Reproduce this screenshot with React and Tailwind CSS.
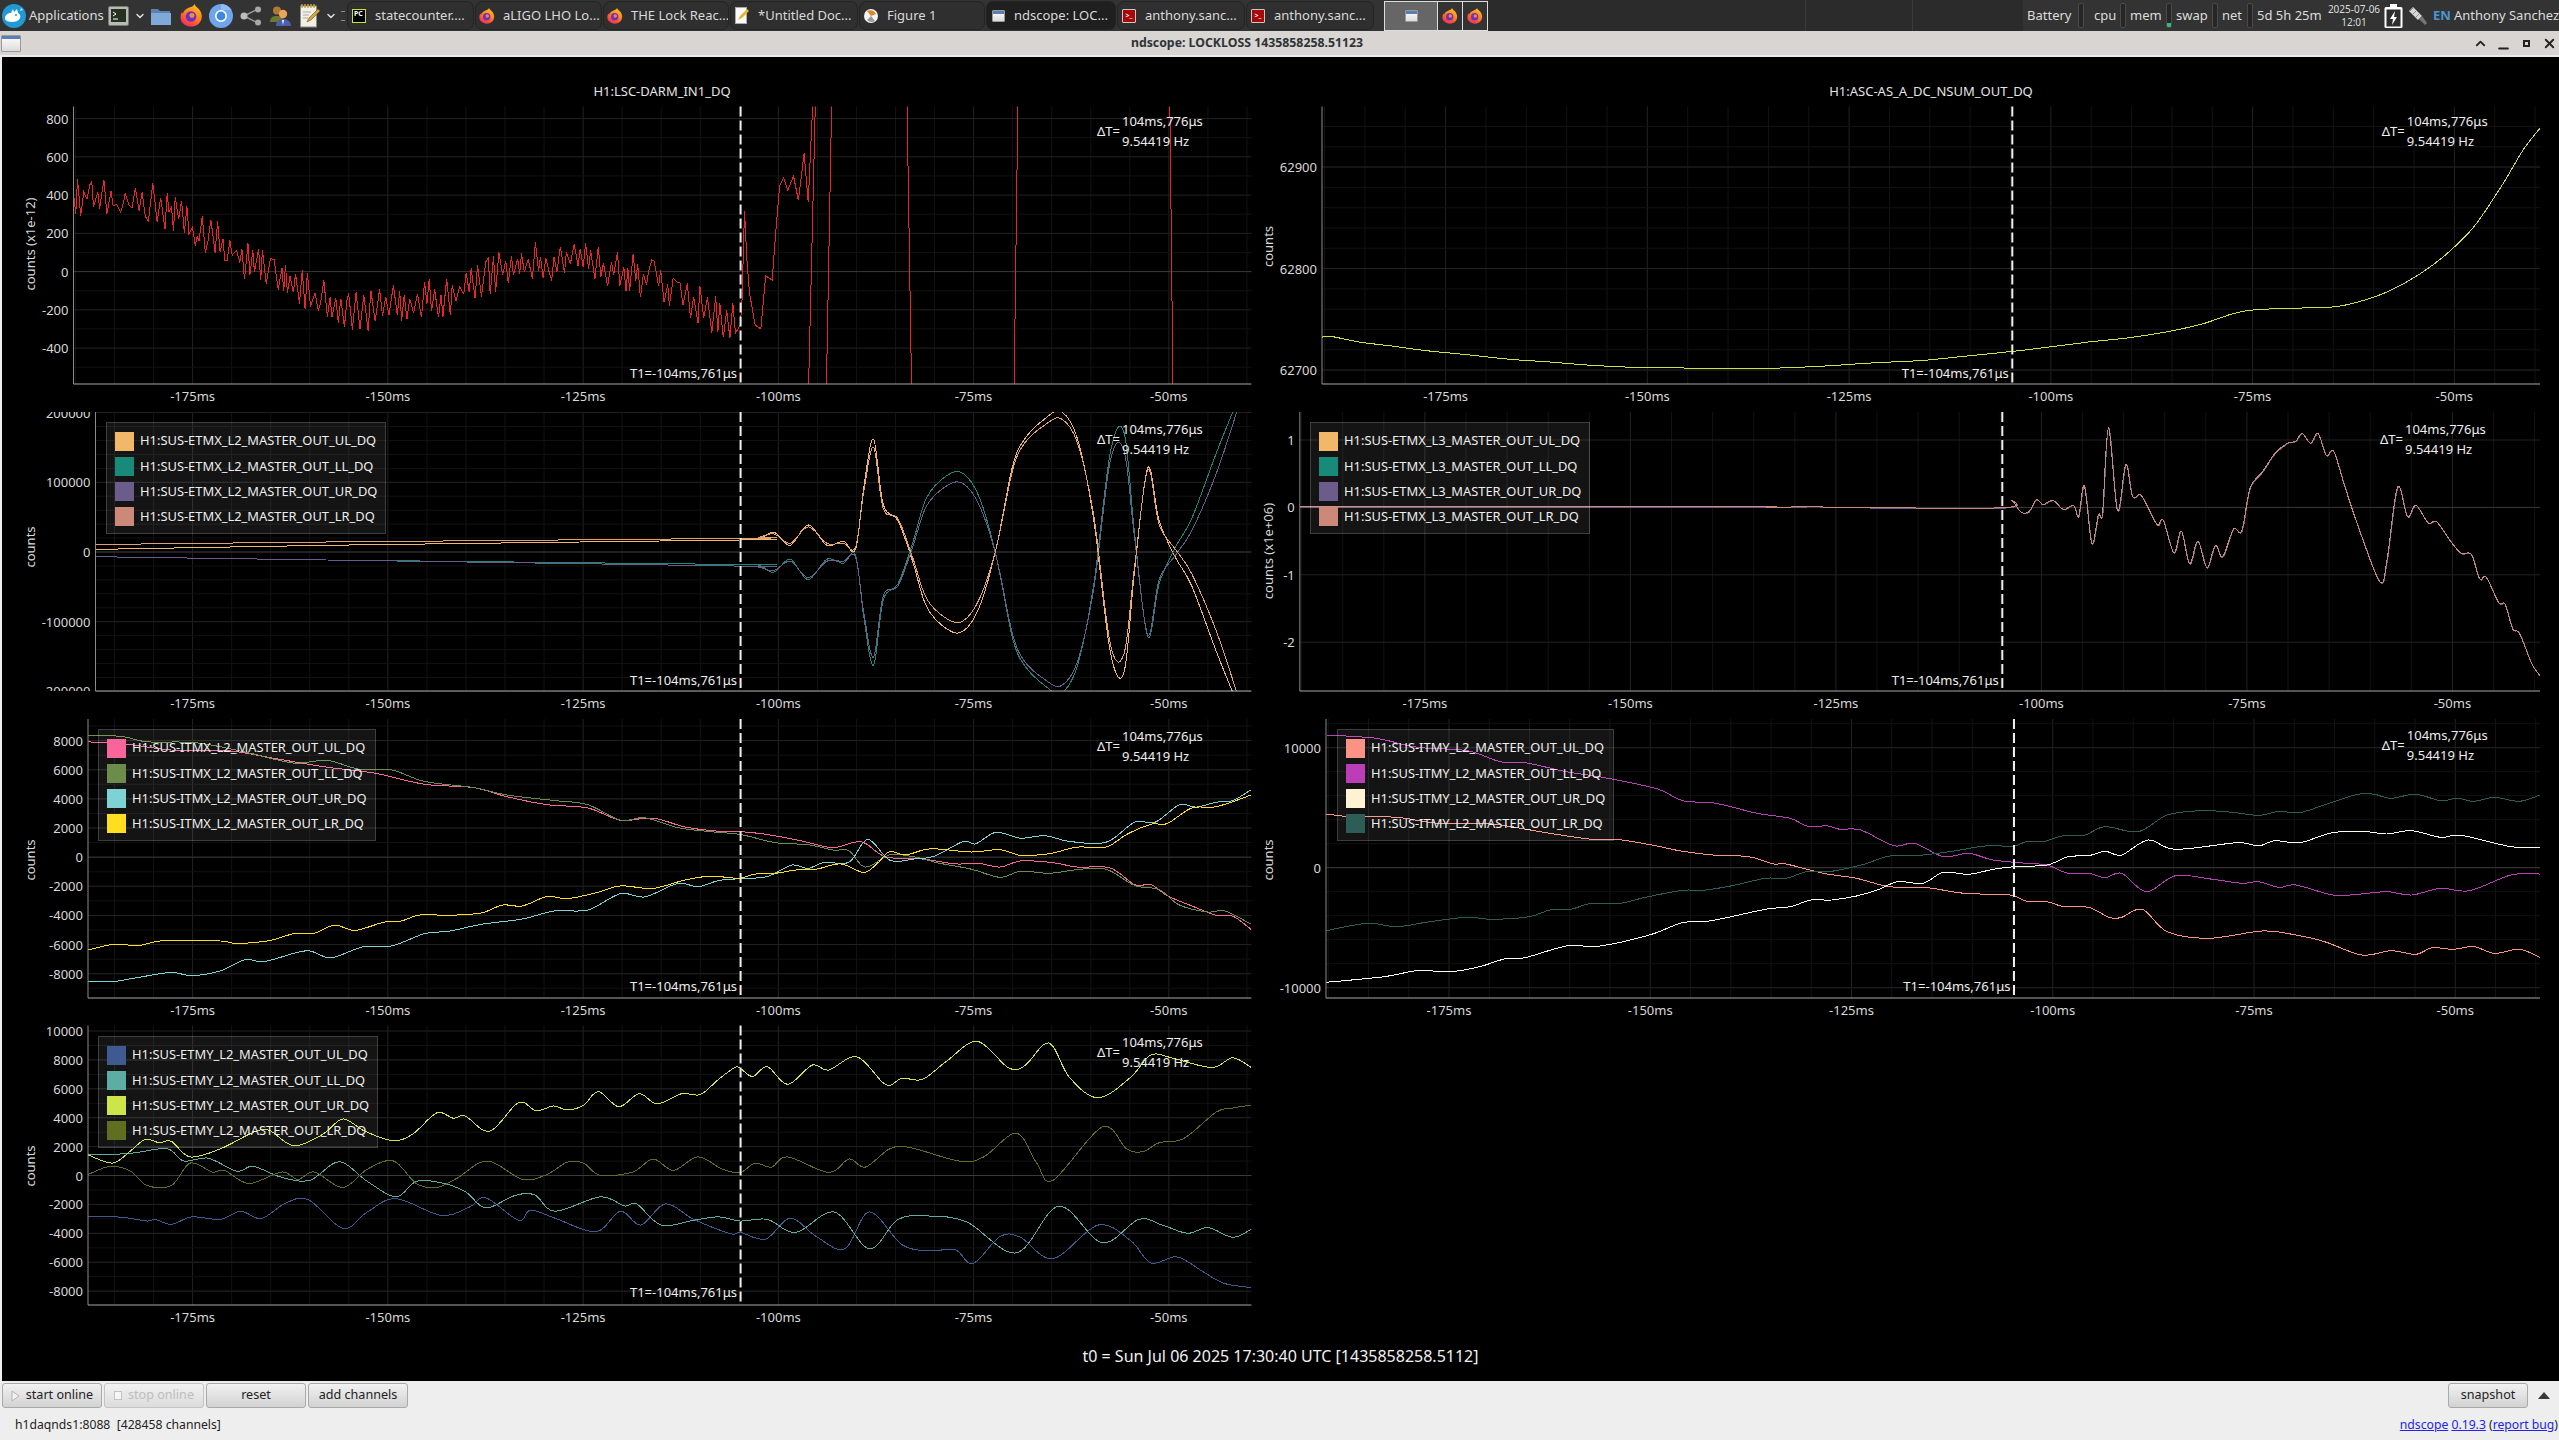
import React from 'react'
import { ChevronDown, ChevronUp, Minus, X } from 'lucide-react'

const SX = 1.225
const SY = 2.45
const SX2 = 1.207

// zoom coordinates -> page coordinates
const left = (pts, oy) => pts.map(([x, y]) => [x / SX, y / SY + oy])
const right = (pts, oy, sy = SY) => pts.map(([x, y]) => [x / SX2 + 1260, y / sy + oy])

const smooth = (p) => {
  let d = `M${p[0][0].toFixed(1)} ${p[0][1].toFixed(1)}`
  for (let i = 0; i < p.length - 1; i++) {
    const a = p[Math.max(i - 1, 0)], b = p[i], c = p[i + 1], e = p[Math.min(i + 2, p.length - 1)]
    const c1 = [b[0] + (c[0] - a[0]) / 6, b[1] + (c[1] - a[1]) / 6]
    const c2 = [c[0] - (e[0] - b[0]) / 6, c[1] - (e[1] - b[1]) / 6]
    d += `C${c1[0].toFixed(1)} ${c1[1].toFixed(1)} ${c2[0].toFixed(1)} ${c2[1].toFixed(1)} ${c[0].toFixed(1)} ${c[1].toFixed(1)}`
  }
  return d
}
const poly = (p) => 'M' + p.map(([x, y]) => `${x.toFixed(1)} ${y.toFixed(1)}`).join('L')

let seed = 17
const rnd = () => {
  seed = (seed * 16807) % 2147483647
  return seed / 2147483647
}

const DARM_BASE = [[90, 285], [170, 290], [210, 320], [250, 370], [300, 440], [350, 500], [400, 545], [450, 570], [500, 545], [550, 530], [600, 480], [650, 450], [700, 440], [750, 465], [800, 490], [850, 540], [880, 580], [907, 600]]
const baseAt = (x) => {
  for (let i = 0; i < DARM_BASE.length - 1; i++) {
    const [a, b] = DARM_BASE[i], [c, d] = DARM_BASE[i + 1]
    if (x <= c) return b + ((x - a) / (c - a)) * (d - b)
  }
  return 600
}
const darmNoise = () => {
  const out = []
  let x = 90
  let up = true
  while (x < 905) {
    const amp = 6 + rnd() * 46
    out.push([x, baseAt(x) + (up ? -amp : amp)])
    x += 2 + rnd() * 3.4
    if (rnd() > 0.1) up = !up
  }
  return out
}
const DARM = [...darmNoise(), [907, 600], [909, 540], [912, 320], [915, 440], [918, 520], [925, 600], [932, 610], [938, 480], [946, 490], [950, 380], [955, 260], [960, 240], [965, 270], [972, 235], [978, 295], [985, 180], [990, 300], [996, 40], [999, 40], [990, 790], [1012, 790], [1019, 40], [1111, 40], [1117, 790], [1242, 790], [1247, 40], [1433, 40], [1437, 790]]

const ETMX_A = [[117, 1150], [400, 1140], [907, 1127], [930, 1125], [948, 1108], [968, 1140], [990, 1090], [1013, 1140], [1033, 1130], [1048, 1150], [1058, 1000], [1070, 880], [1082, 1040], [1100, 1080], [1118, 1180], [1135, 1290], [1160, 1345], [1180, 1350], [1200, 1290], [1220, 1150], [1240, 950], [1255, 880], [1280, 830], [1300, 812], [1320, 880], [1340, 1080], [1360, 1400], [1377, 1450], [1390, 1200], [1406, 950], [1420, 1080], [1440, 1170], [1460, 1240], [1490, 1400], [1510, 1500]]
const ETMX_B = [[117, 1138], [400, 1132], [907, 1123], [930, 1120], [948, 1112], [968, 1135], [990, 1095], [1013, 1135], [1033, 1135], [1048, 1145], [1058, 1010], [1070, 900], [1082, 1050], [1100, 1075], [1118, 1170], [1135, 1270], [1160, 1320], [1180, 1325], [1200, 1270], [1220, 1150], [1240, 960], [1255, 890], [1280, 845], [1300, 830], [1320, 890], [1340, 1070], [1360, 1380], [1377, 1405], [1390, 1190], [1406, 955], [1420, 1090], [1440, 1150], [1460, 1210], [1490, 1350], [1515, 1500]]
const mirror = (p) => p.map(([x, y]) => [x, x < 907 ? 1168 + ((x - 117) / 790) * 22 : 2314 - y])

const L3 = [[48, 1046], [580, 1046], [596, 1044], [620, 1047], [670, 1045], [700, 1047], [896, 1048], [907, 1030], [918, 1058], [928, 1058], [937, 1028], [945, 1040], [957, 1030], [970, 1052], [982, 1042], [988, 1070], [995, 995], [1004, 1135], [1012, 1065], [1017, 1060], [1024, 852], [1035, 1055], [1045, 942], [1053, 1020], [1062, 1015], [1070, 1040], [1083, 1090], [1090, 1078], [1103, 1158], [1112, 1105], [1122, 1185], [1132, 1130], [1143, 1195], [1153, 1140], [1162, 1168], [1175, 1100], [1185, 1105], [1195, 1000], [1210, 960], [1225, 915], [1240, 890], [1250, 885], [1258, 866], [1268, 890], [1277, 866], [1287, 920], [1296, 910], [1310, 1000], [1330, 1120], [1352, 1230], [1360, 1180], [1373, 998], [1385, 1070], [1395, 1042], [1410, 1085], [1420, 1082], [1437, 1130], [1450, 1160], [1462, 1162], [1472, 1222], [1480, 1218], [1495, 1280], [1503, 1285], [1512, 1345], [1520, 1355], [1535, 1430], [1545, 1460]]

const ASC = [[75, 630], [85, 628], [120, 642], [160, 652], [200, 663], [250, 673], [300, 684], [350, 691], [400, 699], [450, 704], [500, 705], [560, 708], [620, 706], [680, 701], [740, 693], [800, 687], [850, 677], [908, 665], [950, 655], [1000, 642], [1050, 631], [1100, 615], [1140, 596], [1175, 572], [1200, 563], [1250, 559], [1300, 555], [1340, 535], [1370, 510], [1400, 475], [1430, 430], [1465, 360], [1500, 255], [1525, 170], [1545, 118]]

const ITMX_UL = [[108, 78], [160, 85], [210, 98], [280, 100], [340, 120], [400, 140], [460, 155], [520, 182], [580, 190], [620, 212], [670, 232], [720, 240], [760, 270], [800, 265], [840, 287], [880, 297], [907, 298], [940, 305], [980, 320], [1020, 337], [1055, 323], [1085, 360], [1130, 365], [1170, 377], [1200, 376], [1225, 385], [1250, 370], [1290, 374], [1320, 385], [1360, 387], [1390, 428], [1410, 428], [1430, 455], [1460, 480], [1490, 503], [1510, 505], [1533, 538]]
const ITMX_LL = [[108, 62], [150, 65], [180, 78], [240, 80], [300, 103], [360, 130], [400, 123], [440, 145], [480, 147], [520, 175], [580, 190], [620, 208], [680, 222], [720, 232], [760, 270], [790, 264], [830, 288], [870, 298], [907, 305], [950, 325], [990, 330], [1020, 343], [1040, 345], [1060, 385], [1090, 355], [1120, 360], [1150, 375], [1190, 390], [1225, 410], [1250, 395], [1285, 400], [1320, 391], [1355, 390], [1390, 430], [1420, 440], [1445, 478], [1480, 495], [1500, 492], [1533, 525]]
const ITMX_UR = [[108, 666], [140, 665], [170, 655], [210, 643], [235, 651], [270, 639], [300, 612], [325, 616], [375, 590], [405, 607], [445, 580], [480, 578], [520, 548], [550, 542], [590, 525], [640, 512], [680, 492], [720, 490], [760, 450], [790, 458], [830, 425], [855, 433], [880, 418], [907, 413], [940, 408], [970, 380], [990, 388], [1010, 373], [1040, 373], [1063, 317], [1090, 368], [1120, 365], [1145, 358], [1180, 322], [1195, 328], [1220, 300], [1250, 314], [1280, 308], [1310, 322], [1355, 324], [1390, 275], [1415, 275], [1445, 232], [1465, 238], [1490, 226], [1510, 222], [1533, 195]]
const ITMX_LR = [[108, 588], [140, 574], [170, 577], [200, 565], [270, 566], [290, 572], [330, 565], [360, 548], [385, 547], [410, 527], [435, 540], [470, 520], [490, 518], [515, 502], [550, 503], [590, 497], [615, 478], [640, 480], [670, 457], [695, 462], [730, 448], [760, 431], [800, 437], [840, 416], [870, 407], [890, 410], [907, 412], [925, 402], [950, 400], [975, 392], [1000, 390], [1030, 377], [1058, 398], [1075, 375], [1090, 347], [1110, 355], [1140, 340], [1190, 348], [1225, 342], [1250, 356], [1285, 352], [1320, 336], [1355, 336], [1380, 305], [1410, 280], [1430, 278], [1460, 240], [1490, 237], [1533, 208]]

const ETMY_UR = [[108, 1090], [138, 1110], [160, 1080], [178, 1052], [195, 1060], [210, 1057], [233, 1095], [270, 1075], [310, 1035], [330, 1030], [360, 1068], [395, 1040], [420, 1002], [445, 1030], [480, 1055], [505, 1040], [535, 987], [555, 1000], [570, 995], [600, 1032], [635, 962], [657, 982], [678, 970], [695, 980], [715, 968], [733, 935], [758, 972], [783, 940], [805, 965], [835, 940], [858, 942], [880, 905], [900, 876], [907, 878], [922, 898], [940, 874], [965, 917], [995, 870], [1015, 882], [1050, 850], [1085, 918], [1105, 902], [1130, 905], [1160, 860], [1197, 812], [1235, 876], [1255, 872], [1285, 816], [1310, 900], [1345, 950], [1385, 900], [1410, 845], [1440, 855], [1485, 876], [1510, 852], [1533, 876]]
const ETMY_LR = [[108, 1138], [135, 1118], [160, 1130], [180, 1165], [210, 1165], [233, 1110], [260, 1132], [275, 1128], [305, 1160], [345, 1132], [365, 1150], [385, 1132], [420, 1170], [450, 1125], [482, 1105], [510, 1160], [535, 1170], [560, 1147], [597, 1105], [640, 1150], [670, 1138], [695, 1108], [715, 1110], [735, 1140], [775, 1132], [800, 1100], [825, 1128], [855, 1095], [885, 1125], [907, 1133], [925, 1110], [945, 1120], [965, 1095], [1015, 1133], [1040, 1100], [1060, 1120], [1090, 1075], [1115, 1072], [1175, 1105], [1205, 1095], [1245, 1037], [1270, 1110], [1290, 1152], [1350, 1022], [1380, 1075], [1400, 1082], [1420, 1060], [1450, 1050], [1490, 985], [1510, 975], [1533, 968]]
const ETMY_LL = [[108, 1090], [145, 1088], [165, 1085], [205, 1075], [225, 1105], [255, 1098], [290, 1130], [310, 1118], [345, 1145], [380, 1152], [415, 1107], [450, 1155], [485, 1193], [510, 1155], [540, 1158], [570, 1180], [595, 1220], [630, 1190], [655, 1188], [680, 1228], [735, 1193], [765, 1215], [780, 1210], [810, 1262], [850, 1250], [880, 1242], [907, 1252], [940, 1248], [975, 1280], [1022, 1230], [1065, 1320], [1100, 1248], [1140, 1240], [1185, 1255], [1245, 1330], [1297, 1216], [1350, 1305], [1395, 1248], [1425, 1263], [1455, 1282], [1480, 1268], [1510, 1292], [1533, 1272]]
const ETMY_UL = [[108, 1240], [150, 1243], [180, 1252], [190, 1248], [210, 1260], [235, 1242], [270, 1248], [295, 1228], [320, 1246], [350, 1208], [378, 1200], [420, 1270], [450, 1230], [485, 1197], [540, 1238], [575, 1218], [595, 1195], [635, 1250], [650, 1225], [680, 1245], [730, 1278], [760, 1228], [785, 1262], [815, 1210], [850, 1248], [895, 1283], [907, 1280], [938, 1296], [968, 1245], [1000, 1290], [1035, 1320], [1065, 1230], [1105, 1310], [1140, 1325], [1170, 1322], [1192, 1356], [1225, 1290], [1250, 1292], [1290, 1344], [1345, 1262], [1385, 1300], [1410, 1355], [1442, 1340], [1475, 1378], [1500, 1405], [1533, 1415]]

const ITMY_UL = [[80, 312], [110, 320], [165, 322], [215, 340], [280, 342], [345, 368], [400, 388], [430, 388], [475, 406], [510, 424], [550, 436], [590, 440], [620, 462], [635, 462], [680, 490], [720, 505], [760, 530], [805, 533], [850, 550], [905, 555], [925, 573], [950, 575], [970, 590], [1000, 592], [1025, 622], [1040, 622], [1065, 598], [1095, 665], [1145, 685], [1210, 663], [1250, 675], [1285, 695], [1330, 735], [1365, 722], [1395, 733], [1415, 713], [1440, 718], [1465, 710], [1490, 730], [1520, 718], [1545, 742]]
const ITMY_LL = [[80, 75], [140, 85], [190, 112], [250, 122], [290, 155], [320, 158], [370, 185], [420, 205], [480, 237], [510, 272], [550, 280], [600, 310], [640, 325], [660, 348], [685, 348], [700, 358], [725, 360], [765, 407], [790, 400], [825, 440], [855, 430], [885, 450], [925, 460], [950, 465], [975, 490], [1000, 490], [1020, 503], [1040, 490], [1070, 545], [1105, 497], [1150, 508], [1185, 520], [1205, 515], [1230, 532], [1250, 525], [1295, 555], [1325, 553], [1360, 545], [1390, 555], [1425, 535], [1460, 542], [1510, 495], [1545, 492]]
const ITMY_UR = [[80, 817], [150, 800], [190, 782], [230, 785], [265, 770], [295, 747], [320, 743], [370, 708], [410, 708], [470, 675], [510, 638], [545, 632], [610, 598], [640, 590], [665, 570], [690, 570], [720, 558], [745, 540], [770, 515], [800, 520], [825, 487], [855, 493], [885, 478], [910, 470], [950, 465], [975, 440], [1000, 437], [1020, 424], [1040, 435], [1072, 390], [1105, 418], [1180, 398], [1205, 408], [1225, 392], [1255, 398], [1295, 368], [1335, 365], [1360, 372], [1390, 362], [1425, 382], [1450, 376], [1510, 410], [1545, 412]]
const ITMY_LR = [[80, 662], [130, 640], [165, 650], [205, 635], [250, 622], [280, 628], [325, 620], [350, 600], [375, 598], [400, 580], [435, 580], [465, 562], [510, 541], [535, 541], [570, 527], [610, 505], [635, 505], [660, 485], [690, 484], [730, 462], [760, 438], [800, 435], [840, 422], [875, 408], [910, 408], [925, 395], [945, 395], [970, 377], [995, 376], [1020, 350], [1060, 365], [1095, 315], [1135, 302], [1170, 306], [1205, 316], [1230, 304], [1255, 308], [1290, 280], [1325, 253], [1345, 253], [1365, 265], [1395, 253], [1425, 272], [1445, 265], [1465, 274], [1490, 262], [1520, 274], [1545, 255]]

const stepTicks = (labels, first, pitch) => labels.map((label, i) => ({ label, y: first + i * pitch }))

const ETMX_COL = ['#f0b868', '#178a7a', '#6c5c8c', '#cc8878']
const ITMX_COL = ['#f7659b', '#6d8b4a', '#7dd3d3', '#ffdd1f']
const ETMY_COL = ['#3e5a91', '#5eada5', '#cde548', '#5f6f1f']
const ITMY_COL = ['#fb9286', '#bb3db8', '#fff3d4', '#2e5c57']
const SUF = ['UL', 'LL', 'UR', 'LR']

const legend = (prefix, colors) => colors.map((c, i) => ({ color: c, name: `H1:SUS-${prefix}_MASTER_OUT_${SUF[i]}_DQ` }))

const Legend = ({ items, pos }) => (
  <div className={`absolute ${pos} flex flex-col gap-[6.3px] pl-[8px] pr-[8px] pt-[8.500px] pb-[7px] bg-[#ffffff14] border border-[#ffffff2e]`}>
    {items.map((it) => (
      <div key={it.name} className="flex items-center gap-[6px] h-[19px] text-[12.9px] text-[#eeeeee] whitespace-nowrap">
        <span className="block w-[19px] h-[19px]" style={{ backgroundColor: it.color }} />
        {it.name}
      </div>
    ))}
  </div>
)

const Plot = ({ id, box, view, l, r, t, b, x0, k, cursor, yTicks, minor = [], ylabel, t1, dt, traces, title, legendItems, legendPos, cellClass }) => {
  const xs = []
  for (let m = -190; m <= -40; m += 5) xs.push(m)
  const tx = (m) => x0 + (m + 175) * k
  const labelY = b + 12
  return (
    <div className={`relative ${cellClass}`}>
      {title}
      <svg className={`block ${box}`} viewBox={view}>
        <defs>
          <clipPath id={id}><rect x={l} y={t} width={r - l} height={b - t} /></clipPath>
          <clipPath id={id + 'y'}><rect x={0} y={t} width={l} height={b - t} /></clipPath>
        </defs>
        {xs.map((m) => tx(m) > l && tx(m) < r && (
          <line key={m} x1={tx(m)} x2={tx(m)} y1={t} y2={b} stroke={m % 25 === 0 ? '#222222' : '#121212'} />
        ))}
        {minor.map((y) => <line key={y} x1={l} x2={r} y1={y} y2={y} stroke="#121212" />)}
        {yTicks.map((tk) => (
          <line key={tk.label} x1={l} x2={r} y1={tk.y} y2={tk.y} stroke={tk.label === '0' ? '#3a3a3a' : '#222222'} />
        ))}
        <g clipPath={`url(#${id})`} fill="none" shapeRendering="crispEdges">
          {traces.map((tr, i) => <path key={i} d={tr.d} stroke={tr.color} strokeWidth={tr.w || 1} />)}
        </g>
        <line x1={l} x2={l} y1={t} y2={b} stroke="#8a8a8a" />
        <line x1={l} x2={r} y1={b} y2={b} stroke="#a8a8a8" />
        <line x1={cursor} x2={cursor} y1={t} y2={b} stroke="#eeeeee" strokeWidth="2" strokeDasharray="10 4" />
        <g fontSize="13" fill="#d8d8d8">
          <g clipPath={`url(#${id}y)`}>
            {yTicks.map((tk) => <text key={tk.label} x={l - 5} y={tk.y} textAnchor="end" dominantBaseline="central">{tk.label}</text>)}
          </g>
          {[-175, -150, -125, -100, -75, -50].map((m) => (
            <text key={m} x={tx(m)} y={labelY} textAnchor="middle" dominantBaseline="central">{m}ms</text>
          ))}
          <text x={ylabel.x} y={ylabel.y} textAnchor="middle" dominantBaseline="central" transform={`rotate(-90 ${ylabel.x} ${ylabel.y})`}>{ylabel.text}</text>
          <text x={cursor - 3.5} y={t1} textAnchor="end" dominantBaseline="central" fill="#eeeeee">T1=-104ms,761μs</text>
          <text x={dt.x} y={dt.y} dominantBaseline="central" fill="#eeeeee">ΔT=</text>
          <text x={dt.x + 25} y={dt.y - 10} dominantBaseline="central" fill="#eeeeee">104ms,776μs</text>
          <text x={dt.x + 25} y={dt.y + 10} dominantBaseline="central" fill="#eeeeee">9.54419 Hz</text>
        </g>
      </svg>
      {legendItems && <Legend items={legendItems} pos={legendPos} />}
    </div>
  )
}

const PlotTitle = ({ children, className }) => (
  <div className={`h-[49px] flex items-end justify-center pb-[6px] text-[13px] leading-[18px] text-[#e4e4e4] ${className}`}>{children}</div>
)

/* ---- small drawings for the panel ---- */
const Whisker = () => (
  <svg width="24" height="24" viewBox="0 0 24 24" className="shrink-0">
    <circle cx="12" cy="12" r="12" fill="#1f9ad6" />
    <path d="M3 14c0-3 3-5 6-5l2-4 1 3 3-3 1 4c2 1 3 3 2 5-1 3-5 4-8 4s-7-1-7-4z" fill="#ffffff" />
    <circle cx="14" cy="11" r="1" fill="#1f9ad6" />
    <path d="M19 4l2 2-3 1z" fill="#cfe9f7" />
  </svg>
)
const Terminal = () => (
  <svg width="21" height="20" viewBox="0 0 21 20" className="shrink-0">
    <rect x="0.5" y="0.5" width="20" height="19" rx="1.5" fill="#b9bcb4" stroke="#777" />
    <rect x="3" y="3" width="15" height="13" fill="#26321f" />
    <path d="M5 6l3 2-3 2M5 13h5" stroke="#fff" strokeWidth="1" fill="none" />
  </svg>
)
const Folder = () => (
  <svg width="20" height="18" viewBox="0 0 20 18" className="shrink-0">
    <path d="M0 2h7l2 2h10v13H0z" fill="#5d83ad" />
    <path d="M0 6h20v12H0z" fill="#7fa9d8" />
  </svg>
)
const Firefox = ({ size = 23 }) => (
  <svg width={size} height={size} viewBox="0 0 24 24" className="shrink-0">
    <defs>
      <linearGradient id="ffg" x1="0.7" y1="0" x2="0.2" y2="1">
        <stop offset="0" stopColor="#ffc11e" />
        <stop offset="0.5" stopColor="#ff7a1f" />
        <stop offset="1" stopColor="#f0245f" />
      </linearGradient>
    </defs>
    <path d="M15 0c1 3 4 4 6 7 3 5 2 11-2 14-5 4-12 3-16-1C0 17 0 12 2 8c0 1 1 2 1 2 1-3 3-5 6-6 2-1 5-1 6-4z" fill="url(#ffg)" />
    <circle cx="11.5" cy="13" r="5.5" fill="#6d2fc0" />
    <circle cx="12.5" cy="12" r="2.6" fill="#f08a3c" />
  </svg>
)
const Chromium = () => (
  <svg width="24" height="24" viewBox="0 0 24 24" className="shrink-0">
    <circle cx="12" cy="12" r="12" fill="#6fa5ec" />
    <path d="M12 0a12 12 0 0 1 10.4 6H12z" fill="#8fbaf2" />
    <circle cx="12" cy="12" r="6" fill="#fff" />
    <circle cx="12" cy="12" r="4.4" fill="#3f86e0" />
  </svg>
)
const Share = () => (
  <svg width="22" height="20" viewBox="0 0 22 20" className="shrink-0">
    <path d="M4 10L18 3M4 10l14 7" stroke="#9a9a9a" strokeWidth="1.5" />
    <circle cx="4" cy="10" r="3.5" fill="#bdbdbd" />
    <circle cx="18" cy="3.5" r="3" fill="#a8a8a8" />
    <circle cx="18" cy="16.5" r="3" fill="#a8a8a8" />
  </svg>
)
const People = () => (
  <svg width="22" height="20" viewBox="0 0 22 20" className="shrink-0">
    <circle cx="7" cy="4.5" r="4" fill="#b07a35" />
    <path d="M0 16c0-5 3-6 7-6s7 2 7 6z" fill="#6b7a2e" />
    <circle cx="13" cy="8" r="4.2" fill="#eaa45c" />
    <path d="M6 20c0-5 3-7 7-7s8 2 8 7z" fill="#4c5fa8" />
    <path d="M12 14h2l-1 5z" fill="#fff" />
  </svg>
)
const Notepad = () => (
  <svg width="20" height="24" viewBox="0 0 20 24" className="shrink-0">
    <rect x="0.5" y="2" width="16" height="21" fill="#f2efe4" stroke="#8a8a80" />
    <path d="M2 0v4M5 0v4M8 0v4M11 0v4M14 0v4" stroke="#c9a33a" strokeWidth="1.4" />
    <path d="M3 8h8M3 11h6M3 14h5" stroke="#aaa" />
    <path d="M7 18l2-4 9-9 2 2-9 9z" fill="#d9a13a" stroke="#6b5a25" strokeWidth="0.6" />
  </svg>
)
const PyCharm = () => (
  <span className="shrink-0 w-[14px] h-[14px] bg-black border border-[#c7e32f] flex items-start justify-start text-[7px] leading-[8px] font-bold text-white pl-[1px]">PC</span>
)
const WinIcon = ({ className }) => (
  <span className={`block shrink-0 bg-[linear-gradient(#fff,#dcdcdc)] border border-[#9a9a9a] rounded-[1px] overflow-hidden ${className}`}>
    <span className="block w-full h-[3px] bg-[#5b7fb5]" />
  </span>
)
const RedTerm = () => (
  <span className="shrink-0 w-[14px] h-[14px] bg-[#a80808] border border-[#c8c8c8] rounded-[1px] flex items-center justify-center text-[7px] leading-none text-white font-bold">&gt;_</span>
)
const Doc = () => (
  <svg width="14" height="17" viewBox="0 0 14 17" className="shrink-0">
    <rect x="0.5" y="0.5" width="11" height="16" fill="#fafafa" stroke="#aaa" />
    <path d="M3 13l2-4 7-7 2 2-7 7z" fill="#e8b72f" />
  </svg>
)
const FigureIcon = () => (
  <svg width="14" height="14" viewBox="0 0 14 14" className="shrink-0">
    <circle cx="7" cy="7" r="7" fill="#f4f4f4" />
    <path d="M7 7L3 2a6.5 6.5 0 0 1 9 3z" fill="#d68a2e" />
    <path d="M7 7l4 5a6.5 6.5 0 0 1-8-1z" fill="#9a9a9a" />
  </svg>
)
const Battery = () => (
  <svg width="19" height="26" viewBox="0 0 19 26" className="shrink-0">
    <path d="M6 1h7v3h4a1.5 1.5 0 0 1 1.500 1.500v18a1.500 1.500 0 0 1-1.500 1.500H2a1.500 1.500 0 0 1-1.500-1.500v-18A1.500 1.500 0 0 1 2 4h4z" fill="#ffffff" />
    <rect x="2.500" y="6.500" width="14" height="17" fill="#2e2e2e" />
    <path d="M11 8l-5 8h3l-1 6 5-8h-3z" fill="#ffffff" />
  </svg>
)
const Plug = () => (
  <svg width="20" height="20" viewBox="0 0 20 20" className="shrink-0">
    <path d="M1 5l4-4 9 9-4 4z" fill="#d8d8d8" />
    <path d="M2 5l3-3M5 8l3-3M8 11l3-3" stroke="#888" />
    <path d="M11 13l3-3 5 7-2 2z" fill="#777" />
  </svg>
)

const Task = ({ icon, label, active, className }) => (
  <div className={`h-[29px] rounded-[7px] border border-[#232323] flex items-center pl-[3px] shrink-0 overflow-hidden whitespace-nowrap text-[#d9d9d9] ${active ? 'bg-[#1f1f1f]' : 'bg-[#2f2f2f]'} ${className}`}>
    <span className="w-[16px] flex justify-center shrink-0">{icon}</span>
    <span className="ml-[8px]">{label}</span>
  </div>
)
const Meter = ({ fill }) => (
  <span className="relative block w-[6px] h-[25px] rounded-[2px] bg-[#262626] border border-[#4a4a4a] mx-[4px] shrink-0 overflow-hidden">
    {fill && <span className="absolute bottom-0 left-0 right-0 h-[4px] bg-[#27c27a]" />}
  </span>
)

const TopBar = () => (
  <div className="h-[31px] flex items-center bg-[#333333] text-[13px] text-[#dcdcdc] shrink-0">
    <div className="ml-[2px] flex items-center shrink-0">
      <Whisker />
      <span className="ml-[3px] w-[79px]">Applications</span>
      <Terminal />
      <ChevronDown size={12} strokeWidth={3} className="ml-[5px] text-[#dddddd]" />
      <span className="w-[5px]" />
      <Folder />
      <span className="w-[9px]" />
      <Firefox />
      <span className="w-[6px]" />
      <Chromium />
      <span className="w-[7px]" />
      <Share />
      <span className="w-[8px]" />
      <People />
      <span className="w-[8px]" />
      <Notepad />
      <ChevronDown size={12} strokeWidth={3} className="ml-[5px] text-[#dddddd]" />
      <span className="ml-[4px] w-[4px] h-[10px] border-y border-[#888888]" />
    </div>
    <div className="ml-[2px] flex items-center gap-[1px] shrink-0">
      <Task className="w-[127px]" icon={<PyCharm />} label="statecounter...." />
      <Task className="w-[127px]" icon={<Firefox size={16} />} label="aLIGO LHO Lo..." />
      <Task className="w-[126px]" icon={<Firefox size={16} />} label="THE Lock Reac..." />
      <Task className="w-[128px]" icon={<Doc />} label="*Untitled Doc..." />
      <Task className="w-[126px]" icon={<FigureIcon />} label="Figure 1" />
      <Task className="w-[130px]" active icon={<WinIcon className="w-[13px] h-[12px]" />} label="ndscope: LOC..." />
      <Task className="w-[128px]" icon={<RedTerm />} label="anthony.sanc..." />
      <Task className="w-[128px]" icon={<RedTerm />} label="anthony.sanc..." />
    </div>
    <div className="ml-[10px] flex h-[30px] border border-[#dddddd] shrink-0">
      <span className="w-[52px] bg-[#666666] flex items-center justify-center"><WinIcon className="w-[13px] h-[12px]" /></span>
      <span className="w-[25px] border-l border-[#dddddd] flex items-center justify-center"><Firefox size={16} /></span>
      <span className="w-[25px] border-l border-[#dddddd] flex items-center justify-center"><Firefox size={16} /></span>
    </div>
    <div className="flex-1 self-stretch bg-[#2b2b2b] flex">
      <span className="ml-[317px] w-[1px] bg-[#3a3a3a]" />
      <span className="ml-[106px] w-[1px] bg-[#3a3a3a]" />
    </div>
    <div className="w-[536px] shrink-0 flex items-center pl-[4px] whitespace-nowrap">
      <span className="w-[47px]">Battery</span>
      <Meter />
      <span className="ml-[6px] w-[22px]">cpu</span>
      <Meter />
      <span className="w-[32px]">mem</span>
      <Meter fill />
      <span className="w-[32px]">swap</span>
      <Meter />
      <span className="w-[21px]">net</span>
      <Meter />
      <span className="w-[66px]">5d 5h 25m</span>
      <span className="ml-[4px] w-[54px] flex flex-col items-center text-[10px] leading-[13px]">
        <span>2025-07-06</span>
        <span>12:01</span>
      </span>
      <span className="ml-[3px] flex"><Battery /></span>
      <span className="ml-[5px] flex"><Plug /></span>
      <span className="ml-[5px] w-[17px] font-bold text-[#4b95cf]">EN</span>
      <span className="ml-[4px]">Anthony Sanchez</span>
    </div>
  </div>
)

const TitleBar = () => (
  <div className="h-[26px] shrink-0 relative flex items-center bg-[#d8d5d2] border-b-2 border-[#ececec] text-[#2e3436]">
    <WinIcon className="ml-[1px] w-[20px] h-[17px]" />
    <span className="absolute left-0 right-[65px] text-center text-[12.3px] font-bold">ndscope: LOCKLOSS 1435858258.51123</span>
    <div className="ml-auto flex items-center gap-[8px] pr-[2px] text-[#222222]">
      <ChevronUp size={15} strokeWidth={3} />
      <Minus size={15} strokeWidth={3} className="translate-y-[5px]" />
      <span className="block w-[7px] h-[7px] mx-[4px] border-2 border-[#222222]" />
      <X size={15} strokeWidth={3} />
    </div>
  </div>
)

const BTN = 'h-[25px] rounded-[3px] border border-[#a9a9a9] bg-gradient-to-b from-[#f2f2f2] to-[#d2d2d2] flex items-center justify-center text-[12.6px] shrink-0'

const BottomBars = () => (
  <div className="bg-[#eeeeee] shrink-0 text-[#222222]">
    <div className="h-[29px] flex items-center pl-[2px] pr-[2px] gap-[2px]">
      <button className={`${BTN} w-[100px]`}>
        <svg width="9" height="12" viewBox="0 0 9 12" className="mr-[6px]"><path d="M1 1l7 5-7 5z" fill="#f2f2f2" stroke="#b5b5b5" /></svg>
        start online
      </button>
      <button className={`${BTN} w-[100px] text-[#bdbdbd] border-[#c4c4c4] from-[#e8e8e8] to-[#dcdcdc]`}>
        <span className="block w-[8px] h-[9px] bg-[#f6f6f6] border border-[#c4c4c4] mr-[6px]" />
        stop online
      </button>
      <button className={`${BTN} w-[100px]`}>reset</button>
      <button className={`${BTN} w-[100px]`}>add channels</button>
      <button className={`${BTN} w-[80px] ml-auto mr-[29px]`}>snapshot</button>
      <span className="absolute right-[9px] block w-0 h-0 border-x-[6px] border-x-transparent border-b-[7px] border-b-[#3a3a3a]" />
    </div>
    <div className="h-[30px] flex items-center justify-between pl-[15px] pr-[1px] text-[12.2px]">
      <span>h1daqnds1:8088&nbsp; [428458 channels]</span>
      <span><a className="text-[#2222ee] underline">ndscope</a> <a className="text-[#2222ee] underline">0.19.3</a> (<a className="text-[#2222ee] underline">report bug</a>)</span>
    </div>
  </div>
)

const LEFT_X0 = 192.6
const LEFT_K = 7.81

export default function App() {
  const p1Ticks = stepTicks(['800', '600', '400', '200', '0', '-200', '-400'], 118.6, 38.25)
  const p2Ticks = stepTicks(['200000', '100000', '0', '-100000', '-200000'], 412.6, 69.7)
  const p3Ticks = stepTicks(['8000', '6000', '4000', '2000', '0', '-2000', '-4000', '-6000', '-8000'], 740.6, 29.14)
  const p4Ticks = stepTicks(['10000', '8000', '6000', '4000', '2000', '0', '-2000', '-4000', '-6000', '-8000'], 1031, 28.9)
  const r1Ticks = stepTicks(['62900', '62800', '62700'], 167, 101.5)
  const r2Ticks = stepTicks(['1', '0', '-1', '-2'], 440, 67.4)
  const r3Ticks = stepTicks(['10000', '0', '-10000'], 747.7, 120)
  const range = (from, to, step) => {
    const out = []
    for (let y = from; y < to; y += step) out.push(y)
    return out
  }
  const asc = smooth(right(ASC, 80))
  const l3 = smooth(right(L3, 80))
  const l3b = smooth(right(L3, 80).map(([x, y]) => [x + 0.4, y + 0.4]))
  const etmxLL = mirror(ETMX_A)
  const etmxUR = mirror(ETMX_B)

  return (
    <div className="relative w-[2559px] h-[1440px] overflow-hidden flex flex-col bg-[#eeeeee] font-['Noto_Sans',sans-serif]">
      <TopBar />
      <TitleBar />
      <main className="flex-1 ml-[2px] bg-black flex flex-col min-h-0">
        <div className="flex h-[1273px] text-[13px]">
          <div className="w-[1260px] flex flex-col shrink-0">
            <Plot
              id="p1" cellClass="h-[349px]" box="w-[1260px] h-[300px]" view="2 106 1260 300"
              title={<PlotTitle className="ml-[71px] w-[1178px]">H1:LSC-DARM_IN1_DQ</PlotTitle>}
              l={73.5} r={1251.4} t={106.5} b={384} x0={LEFT_X0} k={LEFT_K} cursor={740.6}
              yTicks={p1Ticks} minor={range(137.7, 384, 38.25)}
              ylabel={{ x: 29.5, y: 244, text: 'counts (x1e-12)' }}
              t1={373} dt={{ x: 1097, y: 131.4 }}
              traces={[{ d: poly(left(DARM, 80)), color: '#e8262a' }]}
            />
            <Plot
              id="p2" cellClass="h-[306px]" box="w-[1260px] h-[306px]" view="2 406 1260 306"
              l={95.5} r={1251.4} t={412} b={691} x0={LEFT_X0} k={LEFT_K} cursor={740.6}
              yTicks={p2Ticks} minor={range(412.6, 691, 13.94)}
              ylabel={{ x: 29.5, y: 547, text: 'counts' }}
              t1={679.6} dt={{ x: 1097, y: 438.5 }}
              traces={[
                { d: smooth(left(ETMX_A, 80)), color: ETMX_COL[0] },
                { d: smooth(left(etmxLL, 80)), color: ETMX_COL[1] },
                { d: smooth(left(etmxUR, 80)), color: ETMX_COL[2] },
                { d: smooth(left(ETMX_B, 80)), color: '#e0a070' },
              ]}
              legendItems={legend('ETMX_L2', ETMX_COL)} legendPos="left-[104px] top-[16px]"
            />
            <Plot
              id="p3" cellClass="h-[307px]" box="w-[1260px] h-[307px]" view="2 712 1260 307"
              l={88} r={1251.4} t={719} b={998} x0={LEFT_X0} k={LEFT_K} cursor={740.6}
              yTicks={p3Ticks} minor={range(726, 998, 14.57)}
              ylabel={{ x: 29.5, y: 860, text: 'counts' }}
              t1={986} dt={{ x: 1097, y: 746 }}
              traces={[
                { d: smooth(left(ITMX_UL, 710)), color: ITMX_COL[0] },
                { d: smooth(left(ITMX_LL, 710)), color: ITMX_COL[1] },
                { d: smooth(left(ITMX_UR, 710)), color: ITMX_COL[2] },
                { d: smooth(left(ITMX_LR, 710)), color: ITMX_COL[3] },
              ]}
              legendItems={legend('ITMX_L2', ITMX_COL)} legendPos="left-[96px] top-[17px]"
            />
            <Plot
              id="p4" cellClass="h-[311px]" box="w-[1260px] h-[311px]" view="2 1019 1260 311"
              l={88} r={1251.4} t={1025.5} b={1305} x0={LEFT_X0} k={LEFT_K} cursor={740.6}
              yTicks={p4Ticks} minor={range(1045.5, 1305, 14.45)}
              ylabel={{ x: 29.5, y: 1166, text: 'counts' }}
              t1={1292.4} dt={{ x: 1097, y: 1051.6 }}
              traces={[
                { d: smooth(left(ETMY_UL, 710)), color: ETMY_COL[0] },
                { d: smooth(left(ETMY_LL, 710)), color: ETMY_COL[1] },
                { d: smooth(left(ETMY_UR, 710)), color: ETMY_COL[2] },
                { d: smooth(left(ETMY_LR, 710)), color: ETMY_COL[3] },
              ]}
              legendItems={legend('ETMY_L2', ETMY_COL)} legendPos="left-[96px] top-[17px]"
            />
          </div>
          <div className="w-[1297px] flex flex-col shrink-0">
            <Plot
              id="r1" cellClass="h-[349px]" box="w-[1297px] h-[300px]" view="1262 106 1297 300"
              title={<PlotTitle className="ml-[60px] w-[1218px]">H1:ASC-AS_A_DC_NSUM_OUT_DQ</PlotTitle>}
              l={1322} r={2540} t={106.5} b={384} x0={1445.6} k={8.07} cursor={2012.3}
              yTicks={r1Ticks} minor={range(126.5, 384, 20.3)}
              ylabel={{ x: 1268, y: 246.5, text: 'counts' }}
              t1={373} dt={{ x: 2381.8, y: 131.4 }}
              traces={[{ d: asc, color: '#cfe33e' }]}
            />
            <Plot
              id="r2" cellClass="h-[306px]" box="w-[1297px] h-[306px]" view="1262 406 1297 306"
              l={1299.8} r={2540} t={412} b={691} x0={1424.9} k={8.22} cursor={2002.3}
              yTicks={r2Ticks} minor={[]}
              ylabel={{ x: 1268, y: 551, text: 'counts (x1e+06)' }}
              t1={679.6} dt={{ x: 2380, y: 438.5 }}
              traces={[
                { d: l3b, color: ETMX_COL[2] },
                { d: l3, color: ETMX_COL[3] },
              ]}
              legendItems={legend('ETMX_L3', ETMX_COL)} legendPos="left-[48px] top-[16px]"
            />
            <Plot
              id="r3" cellClass="h-[307px]" box="w-[1297px] h-[307px]" view="1262 712 1297 307"
              l={1326} r={2540} t={719} b={998} x0={1449} k={8.05} cursor={2014}
              yTicks={r3Ticks} minor={range(723.7, 998, 24)}
              ylabel={{ x: 1268, y: 860, text: 'counts' }}
              t1={985.7} dt={{ x: 2381.8, y: 745 }}
              traces={[
                { d: smooth(right(ITMY_UL, 710, 3)), color: ITMY_COL[0] },
                { d: smooth(right(ITMY_LL, 710, 3)), color: ITMY_COL[1] },
                { d: smooth(right(ITMY_UR, 710, 3)), color: '#fffbe8' },
                { d: smooth(right(ITMY_LR, 710, 3)), color: ITMY_COL[3] },
              ]}
              legendItems={legend('ITMY_L2', ITMY_COL)} legendPos="left-[75px] top-[17px]"
            />
          </div>
        </div>
        <div className="flex-1 flex items-center justify-center text-[16px] text-[#f0f0f0]">
          t0 = Sun Jul 06 2025 17:30:40 UTC [1435858258.5112]
        </div>
      </main>
      <BottomBars />
    </div>
  )
}
